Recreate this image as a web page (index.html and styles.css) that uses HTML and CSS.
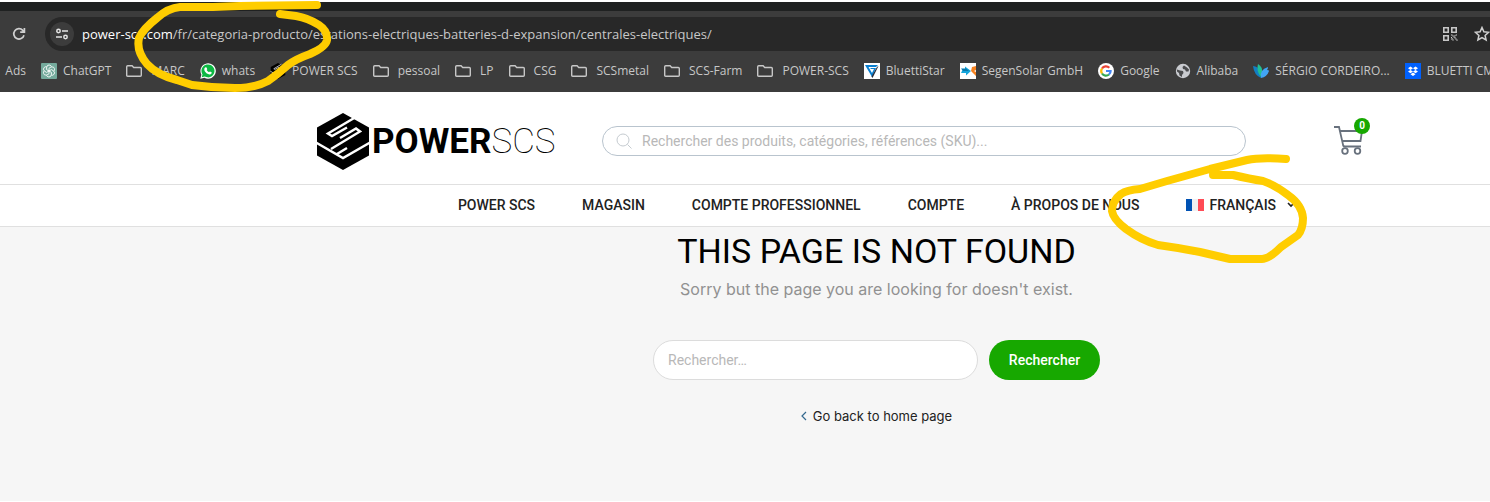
FILE: index.html
```
<!DOCTYPE html>
<html lang="fr">
<head>
  <meta charset="UTF-8">
  <meta name="viewport" content="width=device-width, initial-scale=1.0">
  <title>Power SCS</title>
  <link rel="stylesheet" href="styles.css">
</head>
<body>
  <svg class="symbols" width="0" height="0" aria-hidden="true">
    <symbol id="folder" viewBox="0 0 16 16">
      <path d="M1.7 2.8h4.400l1.600 1.700h6.600q1 0 1 1v6.800q0 1-1 1H1.700q-1 0-1-1V3.800q0-1 1-1z" fill="none" stroke="#c7c7c7" stroke-width="1.400"/>
    </symbol>
    <symbol id="scs" viewBox="0 0 52 57">
      <path d="M26 0L52 14.500V42.500L26 57 0 42.500V14.500z"/>
      <path class="scs-line" d="M38 4.500L11 20.500l4 2.500L30 14.500M14 36L43 18.500l-4-3L23 25M-1 29.500L26 45 53 29.500M20 41l10-6"/>
    </symbol>
  </svg>

  <!-- Navigateur -->
  <div class="browser">
    <div class="tabs"></div>
    <div class="toolbar">
      <button class="reload" aria-label="Actualiser">
        <svg width="16" height="16" viewBox="0 0 16 16"><path d="M13 9.2A5.2 5.2 0 1 1 11.8 4.3L13.2 5.7M13.4 2v4.1H9.2" fill="none" stroke="#d0d0d0" stroke-width="1.7"/></svg>
      </button>
      <div class="address">
        <span class="site-info">
          <svg width="14" height="14" viewBox="0 0 14 14" fill="none" stroke="#e3e3e3" stroke-width="1.5"><circle cx="3.5" cy="4" r="1.7"/><path d="M7 4h6M1 10h6"/><circle cx="10.5" cy="10" r="1.7"/></svg>
        </span>
        <span class="url"><b>power-scs.com</b>/fr/categoria-producto/estations-electriques-batteries-d-expansion/centrales-electriques/</span>
        <svg class="qr" width="16" height="16" viewBox="0 0 16 16" fill="none" stroke="#c7c7c7" stroke-width="1.6"><path d="M1.8 1.8h4.4v4.4H1.8zM9.8 1.8h4.4v4.4H9.8zM1.8 9.8h4.4v4.4H1.8z"/><path d="M9 9h2v2h2V9h2M9 13h2v2M13 11v2h2v2M9 11l2 2" stroke-width="1" stroke-dasharray="1.5 .7"/></svg>
        <svg class="star" width="16" height="16" viewBox="0 0 16 16"><path d="M8 1.5l1.9 4.3 4.7.5-3.5 3.1 1 4.6L8 11.6 3.9 14l1-4.6L1.4 6.3l4.7-.5z" fill="none" stroke="#d0d0d0" stroke-width="1.5"/></svg>
      </div>
    </div>

    <nav class="bookmarks" aria-label="Favoris">
      <a href="#" class="ads"><span>e</span> Ads</a>
      <a href="#"><svg viewBox="0 0 16 16"><rect width="16" height="16" rx="1" fill="#74aa9c"/><g fill="none" stroke="#fff" stroke-width=".8"><path id="petal" d="M8 5.200L10.200 4q2.800-.8 3.300 1.800.2 1.200-.5 2.200M8 5.200v3"/><use href="#petal" transform="rotate(60 8 8)"/><use href="#petal" transform="rotate(120 8 8)"/><use href="#petal" transform="rotate(180 8 8)"/><use href="#petal" transform="rotate(240 8 8)"/><use href="#petal" transform="rotate(300 8 8)"/></g></svg>ChatGPT</a>
      <a href="#" class="folder"><svg><use href="#folder"/></svg>MARC</a>
      <a href="#"><svg viewBox="0 0 16 16"><path d="M.3 15.7l1.100-4A7.700 7.700 0 1 1 4.400 14.700z" fill="#fff"/><path d="M1.700 14.300l.8-2.900A6.500 6.500 0 1 1 4.700 13.500z" fill="#0db843"/><path d="M5.500 4.200l1.100.2.700 1.800-.7.900q.9 1.600 2.400 2.200l.9-.9 1.800.9q.2 1.800-1.600 2.200C7 11.800 3.600 8 4.400 5.600q.3-.9 1.100-1.400z" fill="#fff"/></svg>whats</a>
      <a href="#"><svg><use href="#scs"/></svg>POWER SCS</a>
      <a href="#" class="folder"><svg><use href="#folder"/></svg>pessoal</a>
      <a href="#" class="folder"><svg><use href="#folder"/></svg>LP</a>
      <a href="#" class="folder"><svg><use href="#folder"/></svg>CSG</a>
      <a href="#" class="folder"><svg><use href="#folder"/></svg>SCSmetal</a>
      <a href="#" class="folder"><svg><use href="#folder"/></svg>SCS-Farm</a>
      <a href="#" class="folder"><svg><use href="#folder"/></svg>POWER-SCS</a>
      <a href="#"><svg viewBox="0 0 16 16"><path fill="#fff" d="M0 0h16v16H0z"/><path d="M1 2h13l-2 2H4.500L8 10l2-4H7L6 5h6L8 14z" fill="#0a7fd0"/><path d="M14.500 3L8.500 15l-1-1.500L13 4z" fill="#252b38"/></svg>BluettiStar</a>
      <a href="#"><svg viewBox="0 0 16 16"><path fill="#fff" d="M0 0h16v16H0z"/><path d="M5 3.500l6 4.500-5 4.500V10H1l2-4h2z" fill="#14a5dc"/><path d="M1 5.500h5L9 8H3z" fill="#0878aa"/><path d="M16 3v4l-2 1 2 1v4l-5-5 1-4z" fill="#f58220"/></svg>SegenSolar GmbH</a>
      <a href="#"><svg viewBox="0 0 16 16"><circle cx="8" cy="8" r="8" fill="#fff"/><g fill="none" stroke-width="2.200"><path d="M4 5.500A4.600 4.600 0 0 1 11.300 4.800" stroke="#ea4335"/><path d="M4 5.500a4.600 4.600 0 0 0 0 5" stroke="#fbbc05"/><path d="M4 10.500a4.600 4.600 0 0 0 7 1" stroke="#34a853"/><path d="M11 11.500A4.600 4.600 0 0 0 12.600 8H8" stroke="#4285f4"/></g></svg>Google</a>
      <a href="#"><svg viewBox="0 0 16 16"><circle cx="8" cy="8" r="7.200" fill="#c9cbd0"/><path d="M9 2.500L7.500 4 8 6l2 .5 1 2h2.500l.5-2L12 4.500zM2 6.500l3 1 3 .5.500 2L7 12v2l-2.500-1.500L4 10 2 8.500z" fill="#4a4b4d"/></svg>Alibaba</a>
      <a href="#"><svg viewBox="0 0 16 16"><path d="M0 3q5 0 7 6l1 6Q1 12 0 3z" fill="#127fc3"/><path d="M5 1q5 3 4 9l-1 4Q3 8 5 1z" fill="#22bf91"/><path d="M8 15Q6 7 15 4q0 2-1 3 2 0 2 1-2 6-8 7z" fill="#42a5f5"/></svg>SÉRGIO CORDEIRO...</a>
      <a href="#"><svg viewBox="0 0 16 16"><path fill="#0061fe" d="M0 0h16v16H0z"/><path d="M5.500 3.500L8 5.200 5.500 6.900 3 5.200zM10.500 3.500L13 5.200 10.500 6.900 8 5.200zM5.500 6.900L8 8.600 5.500 10.300 3 8.600zM10.500 6.900L13 8.600 10.500 10.300 8 8.600zM8 9.500l2.500 1.700L8 12.900 5.500 11.200z" fill="#fff"/></svg>BLUETTI CMK</a>
    </nav>
  </div>

  <!-- En-tête -->
  <header class="header">
    <a href="#" class="logo">
      <svg width="52" height="57"><use href="#scs"/></svg>
      <span class="logo-power">POWER</span><span class="logo-scs">SCS</span>
    </a>
    <form class="product-search">
      <svg width="16" height="16" viewBox="0 0 16 16" fill="none" stroke="#c5cbd0"><circle cx="7" cy="7" r="6"/><path d="M11.500 11.500l4 4"/></svg>
      <input type="text" aria-label="Recherche de produits" placeholder="Rechercher des produits, catégories, références (SKU)...">
    </form>
    <a href="#" class="cart" aria-label="Panier">
      <svg width="30" height="30" viewBox="0 0 30 30" fill="none" stroke="#68717d" stroke-width="1.800"><path d="M0 1h5l4 17.500q0 2 2 2h16M6 5h22l-1.500 10H8.500"/><circle cx="11" cy="25" r="2.800"/><circle cx="23.500" cy="25" r="2.800"/></svg>
      <span class="cart-count">0</span>
    </a>
  </header>

  <nav class="menu" aria-label="Menu principal">
    <a href="#">POWER SCS</a>
    <a href="#">MAGASIN</a>
    <a href="#">COMPTE PROFESSIONNEL</a>
    <a href="#">COMPTE</a>
    <a href="#">À PROPOS DE NOUS</a>
    <a href="#" class="language">
      <svg width="18" height="12" viewBox="0 0 18 12"><path fill="#0052b4" d="M0 0h6v12H0z"/><path fill="#f0f0f0" d="M6 0h6v12H6z"/><path fill="#ff4b55" d="M12 0h6v12h-6z"/></svg>
      FRANÇAIS
      <svg class="arrow" width="8" height="6" viewBox="0 0 8 6"><path d="M1 1l3 3 3-3" fill="none" stroke="#222" stroke-width="1.600"/></svg>
    </a>
  </nav>

  <!-- Page introuvable -->
  <main class="not-found">
    <h1>THIS PAGE IS NOT FOUND</h1>
    <p>Sorry but the page you are looking for doesn't exist.</p>
    <form class="search-form">
      <input type="text" aria-label="Rechercher" placeholder="Rechercher…">
      <button type="submit">Rechercher</button>
    </form>
    <a href="#" class="back">
      <svg width="6" height="10" viewBox="0 0 6 10"><path d="M5 1L1 5l4 4" fill="none" stroke="#34698f" stroke-width="1.200"/></svg>
      Go back to home page
    </a>
  </main>

  <!-- Annotations au marqueur -->
  <svg class="marker" width="1490" height="502" viewBox="0 0 1490 502" aria-hidden="true">
    <path d="M317 5L240 6 213 7 180 7Q168 8 157 18Q143 29 139 38Q136 51 147 64Q157 75 177 80L192 85Q214 88 235 88Q255 88 268 81Q278 74 288 65Q296 59 310 54Q326 47 327 40Q328 31 319 25Q308 18 296 16L280 14"/>
    <path d="M1286 159Q1260 157 1247 160L1210 169 1167 181 1140 189Q1127 190 1121 194Q1112 201 1112 211Q1113 219 1126 229Q1141 240 1158 245Q1180 248 1200 252L1230 259H1262Q1269 259 1281 247L1298 235Q1303 229 1303 218Q1302 205 1288 195Q1275 185 1263 181Q1250 179 1233 175H1213"/>
  </svg>
</body>
</html>
```
FILE: styles.css
```
* {
  box-sizing: border-box;
}

body {
  margin: 0;
  padding-top: 2px;
  position: relative;
  background: #fff;
  font-family: Roboto, "Liberation Sans", sans-serif;
  overflow-x: hidden;
}

a {
  color: inherit;
  text-decoration: none;
}

button,
input {
  font-family: inherit;
}

.symbols {
  position: absolute;
}

.scs-line {
  fill: none;
  stroke: #fff;
  stroke-width: 2.5;
}

/* Navigateur */
.browser {
  padding-bottom: 2px;
  background: #3c3c3c;
  font-family: "Open Sans", "Noto Sans", sans-serif;
  color: #c7c7c7;
  overflow: hidden;
}

.browser .scs-line {
  stroke: #3c3c3c;
}

.tabs {
  height: 9px;
  background: #1f2121;
}

.toolbar {
  display: flex;
  align-items: center;
  padding-top: 6px;
}

.reload {
  display: flex;
  width: 45px;
  padding: 0 0 0 11px;
  border: none;
  background: none;
}

.address {
  flex: 1;
  display: flex;
  align-items: center;
  height: 34px;
  padding-left: 5px;
  background: #282828;
  border-radius: 17px 0 0 17px;
}

.site-info {
  display: flex;
  align-items: center;
  justify-content: center;
  width: 24px;
  height: 24px;
  margin-right: 8px;
  border-radius: 50%;
  background: #3c3c3c;
}

.url {
  flex: 1;
  font-size: 13px;
  white-space: nowrap;
}

.url b {
  color: #fff;
  font-weight: 400;
}

.qr {
  margin-right: 16px;
}

.star {
  flex-shrink: 0;
}

.bookmarks {
  display: flex;
  align-items: center;
  gap: 15px;
  height: 39px;
  font-size: 12px;
  white-space: nowrap;
}

.bookmarks a {
  display: flex;
  align-items: center;
  gap: 6px;
  flex-shrink: 0;
}

.bookmarks .folder {
  gap: 9px;
}

.bookmarks svg {
  width: 16px;
  height: 16px;
}

.bookmarks .ads {
  justify-content: flex-end;
  width: 26px;
}

.ads span {
  color: #e8833a;
}

/* En-tête */
.header {
  display: flex;
  align-items: center;
  height: 93px;
  padding: 6px 120px 0 317px;
  border-bottom: 1px solid #e0e0e0;
}

.logo {
  display: flex;
  align-items: center;
  width: 285px;
  color: #000;
  font-size: 35px;
}

.logo-power {
  margin-left: 3px;
  font-weight: 700;
}

.logo-scs {
  font-weight: 100;
}

.product-search {
  flex: 1;
  display: flex;
  align-items: center;
  gap: 10px;
  height: 30px;
  padding: 0 13px;
  border: 1px solid #b9c4ce;
  border-radius: 15px;
}

.product-search input {
  flex: 1;
  padding: 0;
  border: none;
  outline: none;
  background: none;
  font-size: 14px;
}

input::placeholder {
  color: #b8b8b8;
}

.cart {
  position: relative;
  display: flex;
  width: 36px;
  margin-left: 88px;
}

.cart-count {
  position: absolute;
  top: -8px;
  right: 0;
  width: 16px;
  height: 16px;
  border-radius: 50%;
  background: #17a800;
  color: #fff;
  font-size: 10px;
  font-weight: 700;
  line-height: 16px;
  text-align: center;
}

.menu {
  display: flex;
  justify-content: center;
  align-items: center;
  gap: 47px;
  height: 42px;
  padding: 0 0 2px 263px;
  border-bottom: 1px solid #e0e0e0;
  color: #222;
  font-size: 14px;
  font-weight: 500;
  white-space: nowrap;
}

.language {
  display: flex;
  align-items: center;
  gap: 5px;
}

.arrow {
  margin-left: 6px;
}

/* Page introuvable */
.not-found {
  display: flex;
  flex-direction: column;
  align-items: center;
  padding: 4px 0 75px 263px;
  background: #f6f6f6;
}

.not-found h1 {
  margin: 0;
  color: #000;
  font-size: 34px;
  font-weight: 400;
  line-height: 40px;
}

.not-found p {
  margin: 6px 0 39px;
  color: #919191;
  font-family: Inter, Roboto, sans-serif;
  font-size: 16px;
  line-height: 24px;
}

.search-form {
  display: flex;
  align-items: center;
  gap: 11px;
}

.search-form input {
  width: 325px;
  height: 40px;
  padding: 0 14px;
  border: 1px solid #dcdcdc;
  border-radius: 20px;
  background: #fff;
  font-size: 14px;
}

.search-form button {
  width: 111px;
  height: 40px;
  border: none;
  border-radius: 20px;
  background: #17a800;
  color: #fff;
  font-size: 14px;
  font-weight: 500;
}

.back {
  display: flex;
  align-items: center;
  gap: 6px;
  margin-top: 26px;
  color: #222;
  font-family: Inter, Roboto, sans-serif;
  font-size: 13px;
  line-height: 20px;
}

/* Annotations */
.marker {
  position: absolute;
  top: 0;
  left: 0;
  fill: none;
  stroke: #ffcd00;
  stroke-width: 8;
  stroke-linecap: round;
  stroke-linejoin: round;
  pointer-events: none;
}
```
